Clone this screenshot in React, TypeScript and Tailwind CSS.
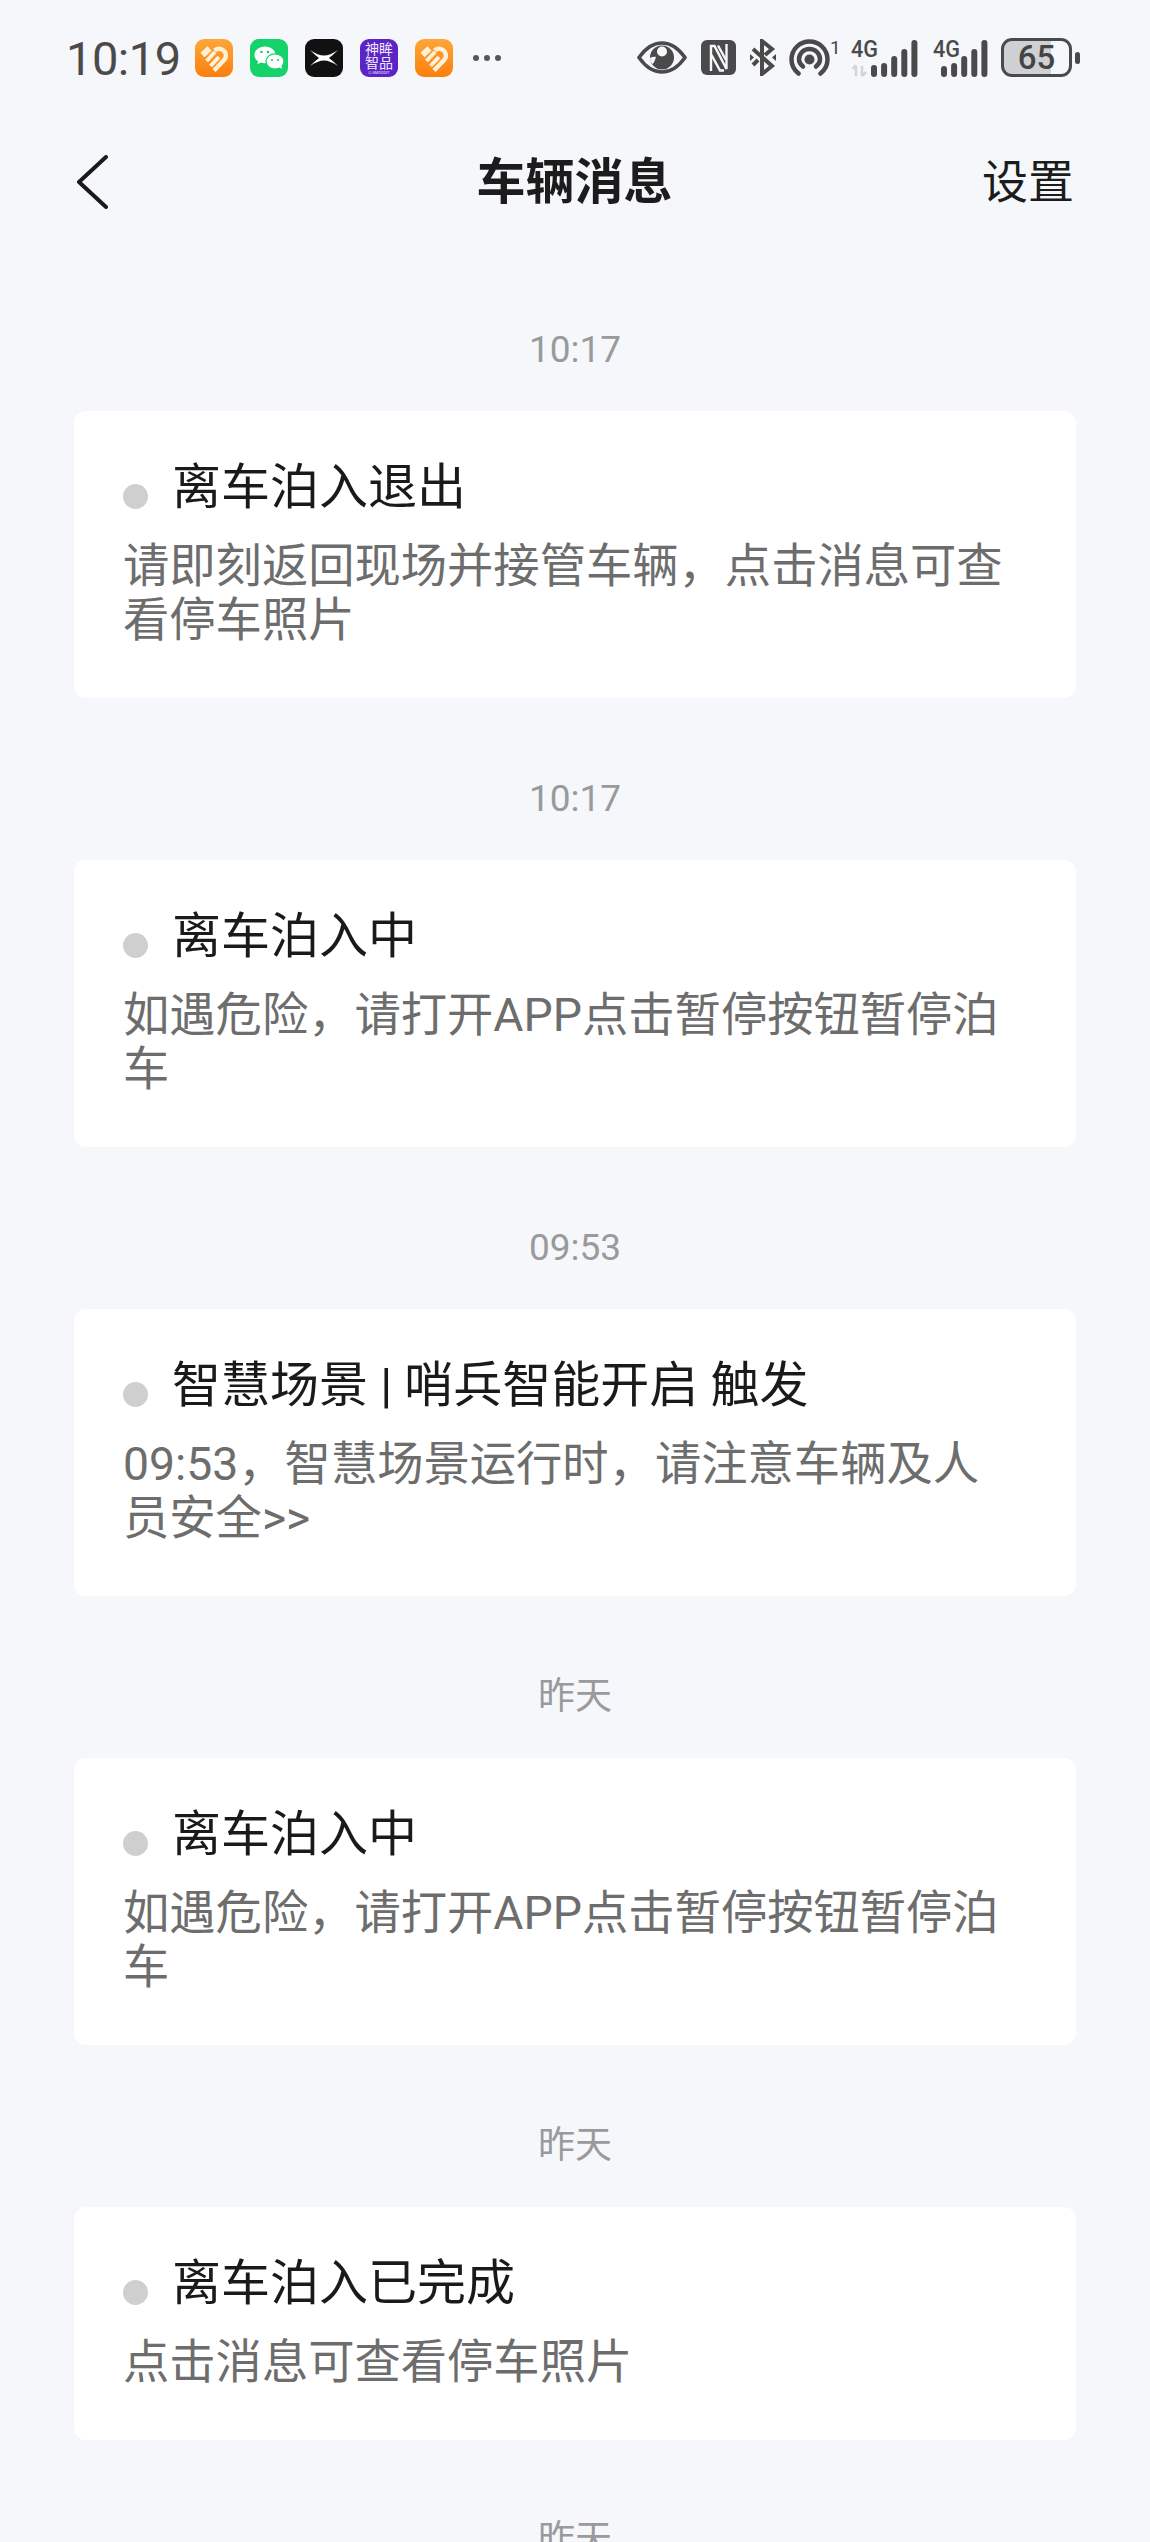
const messages = [
  { time: "10:17", title: "离车泊入退出", body: "请即刻返回现场并接管车辆，点击消息可查看停车照片" },
  { time: "10:17", title: "离车泊入中", body: "如遇危险，请打开APP点击暂停按钮暂停泊车" },
  { time: "09:53", title: "智慧场景 | 哨兵智能开启 触发", body: "09:53，智慧场景运行时，请注意车辆及人员安全>>" },
  { time: "昨天", title: "离车泊入中", body: "如遇危险，请打开APP点击暂停按钮暂停泊车" },
  { time: "昨天", title: "离车泊入已完成", body: "点击消息可查看停车照片" },
];

function HeartIcon() {
  return (
    <svg width="38" height="38" viewBox="0 0 38 38" className="shrink-0">
      <defs>
        <linearGradient id="hg" x1="0" y1="0" x2="0" y2="1">
          <stop offset="0" stopColor="#ffa63a" />
          <stop offset="1" stopColor="#fb7f0c" />
        </linearGradient>
      </defs>
      <rect width="38" height="38" rx="9" fill="url(#hg)" />
      <g fill="none" stroke="#fff1d6" strokeLinecap="butt" strokeWidth="4">
        <path d="M7.500 16 L14.500 9.500" strokeWidth="6" />
        <path d="M11.500 22 L20 13" />
        <path d="M15.500 27 L24 18" />
        <path d="M19 31.500 L29.500 20.500 C32 17.500 31 13 28 11 C25 9 22 9.500 19.500 11.500" strokeWidth="4.500" />
      </g>
    </svg>
  );
}

function WeChatIcon() {
  return (
    <svg width="38" height="38" viewBox="0 0 38 38" className="shrink-0">
      <rect width="38" height="38" rx="9" fill="#15d36a" />
      <path d="M15 7.500c-6 0-10.500 3.700-10.500 8.400 0 2.700 1.400 4.900 3.700 6.400l-.9 3 3.400-1.700c1.300.4 2.800.7 4.300.7 6 0 10.500-3.800 10.500-8.400S21 7.500 15 7.500z" fill="#fff" />
      <ellipse cx="25" cy="22.500" rx="9" ry="7.600" fill="#fff" stroke="#15d36a" strokeWidth="1.300" />
      <path d="M29 28l3 2-.6-3.500z" fill="#fff" />
      <circle cx="11.500" cy="13" r="1.300" fill="#15d36a" />
      <circle cx="18" cy="13" r="1.300" fill="#15d36a" />
      <circle cx="22" cy="21" r="1.100" fill="#15d36a" />
      <circle cx="28" cy="21" r="1.100" fill="#15d36a" />
    </svg>
  );
}

function XIcon() {
  return (
    <svg width="38" height="38" viewBox="0 0 38 38" className="shrink-0">
      <rect width="38" height="38" rx="9" fill="#111111" />
      <path d="M5 11 Q13 16.500 19 16.500 Q25 16.500 33 11 Q28 16 24 19 Q28 22 33 27 Q25 21.500 19 21.500 Q13 21.500 5 27 Q10 22 14 19 Q10 16 5 11Z" fill="#fff" />
    </svg>
  );
}

function PurpleIcon() {
  return (
    <div className="flex h-[38px] w-[38px] shrink-0 flex-col items-center overflow-hidden rounded-[9px] bg-[#5a25c4] pt-[3px] text-[#f1e6ff]">
      <span className="h-[14px] text-[14px] leading-[14px]">神眸</span>
      <span className="h-[14px] text-[14px] leading-[14px]">智品</span>
      <span className="mt-[1px] h-[4px] whitespace-nowrap text-[4px] leading-[4px]">C-SMOODIT</span>
    </div>
  );
}

function Eye() {
  return (
    <svg width="50" height="33" viewBox="0 0 50 33" className="shrink-0">
      <path d="M2 16.500 C9 6.500 17 2 25 2 C33 2 41 6.500 48 16.500 C41 26.500 33 31 25 31 C17 31 9 26.500 2 16.500Z" fill="none" stroke="#4a4a4a" strokeWidth="3.500" />
      <circle cx="25" cy="16.500" r="12" fill="#4a4a4a" />
      <circle cx="25" cy="10.500" r="5" fill="#f5f7fb" />
      <path d="M13 17 C15 16 17 15.500 19 16 C18 19 17 22 15.500 23 C14 22 13 19 13 17Z" fill="#f5f7fb" />
    </svg>
  );
}

function Nfc() {
  return (
    <svg width="35" height="35" viewBox="0 0 35 35" className="ml-[14px] shrink-0">
      <rect width="35" height="35" rx="6" fill="#4a4a4a" />
      <g fill="none" stroke="#f5f7fb" strokeWidth="2.400">
        <path d="M10 31 V6 H13.500 L25.500 29 V4" />
        <path d="M17 5.500 L25 20" />
        <path d="M10.500 15 L19 30.500 H23" />
      </g>
    </svg>
  );
}

function Bluetooth() {
  return (
    <svg width="26" height="37" viewBox="0 0 26 37" className="ml-[14px] shrink-0">
      <g fill="none" stroke="#4a4a4a" strokeWidth="4">
        <path d="M3 10 L22 27 L12 35 V2 L22 10 L15 16" />
        <path d="M3 26 L8 21" />
      </g>
      <path d="M0 15 L4 18.500 L0 22Z" fill="#4a4a4a" />
      <path d="M26 15 L22 18.500 L26 22Z" fill="#4a4a4a" />
    </svg>
  );
}

function Hotspot() {
  return (
    <svg width="41" height="37" viewBox="0 0 41 37" className="ml-[13px] shrink-0">
      <g fill="none" stroke="#4a4a4a" strokeWidth="4.500" strokeLinecap="round">
        <path d="M9.500 34.500 C4.500 30.500 2.500 26 2.500 20.500 C2.500 10.500 10.500 2.500 20.500 2.500 C30.500 2.500 38.500 10.500 38.500 20.500 C38.500 26 36.500 30.500 31.500 34.500" />
        <path d="M14 27.500 C11.500 25.500 10 23 10 20.500 C10 14.500 14.500 10 20.500 10 C26.500 10 31 14.500 31 20.500 C31 23 29.500 25.500 27 27.500" />
      </g>
      <circle cx="20.500" cy="20.500" r="5" fill="#4a4a4a" />
    </svg>
  );
}

function Signal({ arrows }: { arrows: boolean }) {
  const offset = arrows ? 20 : 8;
  const bars = arrows ? [12, 14, 21, 28, 37] : [11, 14, 21, 28, 37];
  return (
    <svg width={arrows ? 67 : 54} height="38" viewBox={`0 0 ${arrows ? 67 : 54} 38`} className={arrows ? "ml-[13px] shrink-0 overflow-visible" : "ml-[15px] shrink-0 overflow-visible"}>
      <text x="0" y="18" fontFamily="Roboto" fontWeight="500" fontSize="23" fill="#4a4a4a" textLength="27" lengthAdjust="spacingAndGlyphs">4G</text>
      {arrows && <path d="M5 27 L5 37 M1.500 30 L5 26 M11 27 L11 37 M11 37 L15 33" stroke="#d4d4d6" strokeWidth="2.500" fill="none" />}
      {bars.map((h, i) => (
        <rect key={i} x={offset + i * 10.1} y={38 - h} width="6" height={h} rx="3" fill="#4a4a4a" />
      ))}
    </svg>
  );
}

function Battery() {
  return (
    <div className="ml-[14px] flex shrink-0 items-center">
      <div className="flex h-[39px] w-[71px] items-center justify-center rounded-[11px] border-[3px] border-[#4a4a4a] bg-[linear-gradient(90deg,#cfd0d3_0%,#cfd0d3_72%,transparent_72%)] font-['Roboto','sans-serif'] text-[33px] font-medium leading-none text-[#444444]">
        65
      </div>
      <div className="ml-[3px] h-[12px] w-[5px] rounded-full bg-[#4a4a4a]" />
    </div>
  );
}

export default function App() {
  return (
    <div className="h-[2542px] w-[1150px] overflow-hidden bg-[#f5f7fb] font-['Roboto','Noto_Sans_CJK_SC','sans-serif']">
      <div className="flex h-[77px] items-center justify-between pl-[66px] pr-[70px] pt-[38px]">
        <div className="flex items-center">
          <span className="mt-[2px] w-[114px] text-[47px] leading-none tracking-[-0.5px] text-[#4a4a4a]">10:19</span>
          <div className="ml-[15px] flex gap-[17px]">
            <HeartIcon />
            <WeChatIcon />
            <XIcon />
            <PurpleIcon />
            <HeartIcon />
          </div>
          <div className="ml-[20px] flex gap-[5px]">
            <span className="h-[6px] w-[6px] rounded-full bg-[#55575a]" />
            <span className="h-[6px] w-[6px] rounded-full bg-[#55575a]" />
            <span className="h-[6px] w-[6px] rounded-full bg-[#55575a]" />
          </div>
        </div>
        <div className="flex items-center">
          <Eye />
          <Nfc />
          <Bluetooth />
          <Hotspot />
          <span className="mb-[20px] w-[8px] text-[19px] leading-none text-[#4a4a4a]">1</span>
          <Signal arrows />
          <Signal arrows={false} />
          <Battery />
        </div>
      </div>

      <div className="mt-[65px] grid h-[80px] grid-cols-[1fr_auto_1fr] items-center pl-[75px] pr-[76px]">
        <svg width="34" height="54" viewBox="0 0 34 54" className="text-[#1a1a1a]">
          <path d="M31 2 L4 27 L31 52" fill="none" stroke="currentColor" strokeWidth="4" strokeLinecap="round" strokeLinejoin="round" />
        </svg>
        <h1 className="text-[49px] font-bold leading-none text-[#1c1c1c]">车辆消息</h1>
        <span className="justify-self-end text-[46px] leading-none text-[#1c1c1c]">设置</span>
      </div>

      <div className="pl-[74px] pr-[74px] pt-[27px]">
        {messages.map((m, i) => (
          <div key={i}>
            <div className="mb-[36px] mt-[76px] h-[50px] text-center text-[37px] leading-[50px] text-[#999a9c]">{m.time}</div>
            <div className="rounded-[12px] bg-white pb-[51px] pl-[49px] pr-[63px] pt-[47px]">
              <div className="flex items-center">
                <span className="mt-[17px] h-[25px] w-[25px] shrink-0 rounded-full bg-[#cfcfcf]" />
                <span className="ml-[24px] text-[49px] leading-[60px] text-[#1a1a1a]">{m.title}</span>
              </div>
              <p className="mt-[21px] text-[46.3px] leading-[54px] text-[#6d6d6d]">{m.body}</p>
            </div>
          </div>
        ))}
        <div className="mt-[75px] h-[50px] text-center text-[37px] leading-[50px] text-[#999a9c]">昨天</div>
      </div>
    </div>
  );
}
